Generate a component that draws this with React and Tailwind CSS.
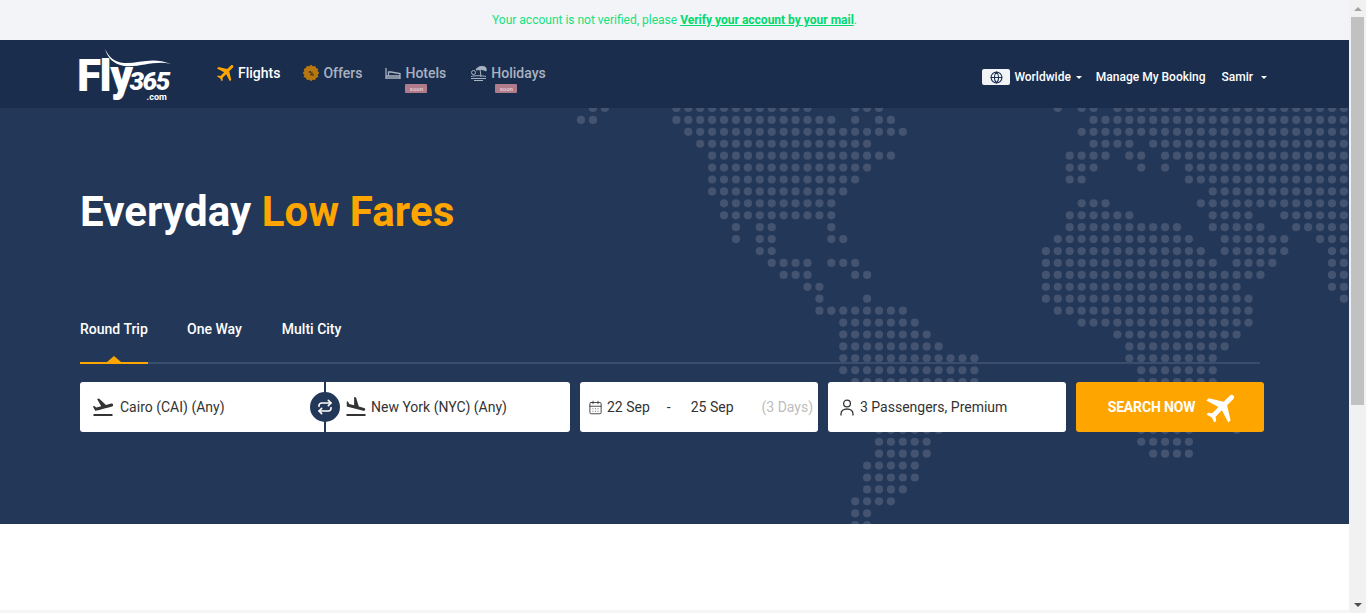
import { Repeat, CalendarDays, Globe } from 'lucide-react';
import { MdFlight, MdFlightTakeoff, MdFlightLand } from 'react-icons/md';

// dot map, one entry per row: [first column, last column] pairs
const MAP_ROWS = [
  [[1, 2], [8, 19], [23, 25], [40, 40], [42, 43], [45, 64]],
  [[0, 1], [8, 21], [23, 23], [25, 26], [43, 64]],
  [[9, 27], [42, 64]],
  [[10, 24], [43, 46], [48, 64]],
  [[11, 26], [41, 44], [46, 47], [49, 64]],
  [[11, 24], [41, 43], [47, 47], [49, 49], [51, 64]],
  [[11, 23], [41, 42], [51, 64]],
  [[11, 22], [53, 64]],
  [[12, 21], [42, 44], [52, 64]],
  [[12, 21], [41, 46], [53, 56], [59, 64]],
  [[13, 13], [15, 16], [21, 21], [41, 50], [53, 57], [60, 64]],
  [[13, 13], [15, 16], [21, 22], [40, 51], [54, 59], [62, 64]],
  [[15, 16], [39, 52], [54, 59], [63, 64]],
  [[16, 19], [21, 23], [39, 53], [55, 58], [63, 64]],
  [[17, 19], [23, 24], [39, 57], [63, 64]],
  [[19, 20], [39, 55], [63, 64]],
  [[20, 20], [24, 24], [39, 56], [64, 64]],
  [[20, 27], [40, 56]],
  [[22, 28], [42, 56]],
  [[22, 29], [45, 55]],
  [[22, 30], [46, 54]],
  [[22, 33], [46, 53]],
  [[22, 33], [47, 53]],
  [[23, 33], [47, 53]],
  [[24, 32], [47, 53]],
  [[24, 32], [47, 53]],
  [[25, 31], [47, 53]],
  [[25, 30], [47, 51], [55, 55]],
  [[25, 29], [47, 51]],
  [[25, 29], [48, 51]],
  [[24, 28]],
  [[24, 28]],
  [[24, 27]],
  [[23, 26]],
  [[23, 24]],
  [[23, 24]],
];

const DotMap = () => (
  <svg className="absolute inset-0 w-full h-full" viewBox="0 0 1349 416" preserveAspectRatio="xMinYMin slice">
    {MAP_ROWS.flatMap((ranges, r) =>
      ranges.flatMap(([from, to]) =>
        Array.from({ length: to - from + 1 }, (_, i) => (
          <circle key={`${r}-${from + i}`} cx={581 + (from + i) * 11.92} cy={r * 11.92} r="4.1" fill="#435370" />
        ))
      )
    )}
  </svg>
);

const Logo = () => (
  <div className="relative flex items-start w-[92px] h-[52px] text-white font-['Roboto',sans-serif]">
    <svg className="absolute left-0 top-0" width="92" height="30" viewBox="0 0 92 30">
      <path d="M25 1 C29 9 34 14 44 15 C58 16 72 8 91 16 C74 12 60 20 44 18 C33 16 28 10 25 1 Z" fill="#fff" />
    </svg>
    <span className="ml-[-3px] mt-[5px] text-[44px] leading-[46px] font-black tracking-[-1.5px]">Fly</span>
    <div className="flex flex-col items-end ml-[-2px] mt-[21px]">
      <span className="text-[26px] leading-[24px] font-black italic tracking-[-1.5px]">365</span>
      <span className="text-[9px] leading-[8px] font-bold mr-[2px]">.com</span>
    </div>
  </div>
);

// scalloped sticker behind the percent sign
const BadgeIcon = () => (
  <svg width="16" height="16" viewBox="0 0 16 16">
    <circle cx="8" cy="8" r="7" fill="#b8780f" />
    {Array.from({ length: 12 }, (_, i) => (
      <circle key={i} cx={8 + 6.6 * Math.cos((i * Math.PI) / 6)} cy={8 + 6.6 * Math.sin((i * Math.PI) / 6)} r="1.4" fill="#b8780f" />
    ))}
    <text x="8" y="10.5" textAnchor="middle" fontSize="7.5" fontWeight="700" fill="#2a2a2a">%</text>
  </svg>
);

const BedIcon = () => (
  <svg width="16" height="12" viewBox="0 0 16 12" fill="none" stroke="#a9b2c0" strokeWidth="1.3">
    <path d="M1 1v11M1 9h14M15 12V6.500L6 5H3.500v4M1 11h14" />
  </svg>
);

const BeachIcon = () => (
  <svg className="ml-px" width="17" height="16" viewBox="0 0 17 16" fill="none" stroke="#a9b2c0" strokeWidth="1">
    <path d="M6 5c1-3 5-4.500 9-3 1 .5 1.500 2 1 4-2-1.500-6-2-10-1z" fill="#a9b2c0" />
    <path d="M10 4l1 8" />
    <circle cx="3.500" cy="7.500" r="2" />
    <path d="M1 11.500c3-1 11-1 15 0M1 13.500h15M4 15.500h9" />
  </svg>
);

const PersonIcon = () => (
  <svg width="14" height="17" viewBox="0 0 14 17" fill="none" stroke="#333" strokeWidth="1.3">
    <circle cx="7" cy="4.500" r="3.400" />
    <path d="M1 16.500v-1.500c0-3 2.500-5 6-5s6 2 6 5v1.500" />
  </svg>
);

const Caret = () => (
  <span className="inline-block w-0 h-0 border-x-[3px] border-x-transparent border-t-[3px] border-t-white" />
);

const NavItem = ({ icon, label, active, soonClass }) => (
  <div className={`relative flex items-center gap-1 text-sm font-medium ${active ? 'text-white' : 'text-[#a9b2c0]'}`}>
    {icon}
    <span>{label}</span>
    {soonClass && (
      <span className={`absolute top-[21px] w-[22px] h-[9px] rounded-[1px] bg-[#b07c8c] text-[6px] leading-[9px] text-center text-[#e6d5da] ${soonClass}`}>soon</span>
    )}
  </div>
);

export default function App() {
  return (
    <div className="flex h-[613px] overflow-hidden bg-white font-['Roboto',sans-serif]">
      <main className="flex-1 flex flex-col min-w-0">
        <div className="h-10 shrink-0 bg-[#f2f4f7] flex items-center justify-center text-xs text-[#12e27f]">
          <span>Your account is not verified, please&nbsp;</span>
          <a className="font-bold underline text-[#00d96f]">Verify your account by your mail</a>
          <span>.</span>
        </div>

        <nav className="h-[68px] shrink-0 bg-[#1a2d4d] flex items-center pl-20 pr-[82px]">
          <Logo />
          <div className="flex items-center h-5 ml-[46px] mt-[-3px] gap-[23px]">
            <NavItem active label="Flights" icon={<MdFlight size={23} className="-ml-[3px] -mr-1 text-[#ffa500] rotate-45" />} />
            <NavItem label="Offers" icon={<BadgeIcon />} />
            <NavItem soonClass="left-[20px]" label="Hotels" icon={<BedIcon />} />
            <NavItem soonClass="left-[26px]" label="Holidays" icon={<BeachIcon />} />
          </div>
          <div className="ml-auto mt-[6px] flex items-center text-xs font-medium text-white">
            <span className="flex items-center justify-center w-7 h-4 rounded-[2px] bg-[#f2f4f7]">
              <Globe size={13} className="text-[#1a2d4d]" strokeWidth={2} />
            </span>
            <span className="ml-1">Worldwide</span>
            <span className="ml-[5px] flex"><Caret /></span>
            <span className="ml-[14px]">Manage My Booking</span>
            <span className="ml-4">Samir</span>
            <span className="ml-2 flex"><Caret /></span>
          </div>
        </nav>

        <section className="relative h-[416px] shrink-0 overflow-hidden bg-[#233858]">
          <DotMap />
          <div className="relative pl-20 pr-[85px]">
            <h1 className="mt-[79px] text-[42px] leading-[50px] font-bold tracking-[0.1px] text-white">
              Everyday <span className="text-[#ffa500]">Low Fares</span>
            </h1>

            <div className="mt-[77px] flex gap-10 w-[1180px] h-[50px] border-b-2 border-[#3a4d6c] text-sm font-medium text-white">
              <div className="relative h-[50px] w-[68px] pt-[5px] border-b-2 border-[#ffa500]">
                Round Trip
                <span className="absolute left-[27px] bottom-0 w-0 h-0 border-x-[7px] border-x-transparent border-b-[6px] border-b-[#ffa500]" />
              </div>
              <div className="pt-[5px] ml-[-1px]">One Way</div>
              <div className="pt-[5px]">Multi City</div>
            </div>

            <div className="mt-[18px] flex h-[50px] text-sm text-[#333]">
              <div className="relative flex w-[490px] bg-white rounded-[3px]">
                <div className="w-[244px] flex items-center pl-[11px] gap-[5px]">
                  <MdFlightTakeoff size={24} className="text-[#333]" />
                  <span>Cairo (CAI) (Any)</span>
                </div>
                <div className="flex-1 flex items-center pl-[18px] gap-[3px] border-l-2 border-[#233858]">
                  <MdFlightLand size={24} className="text-[#333]" />
                  <span>New York (NYC) (Any)</span>
                </div>
                <span className="absolute left-[230px] top-[10px] flex items-center justify-center w-[30px] h-[30px] rounded-full bg-[#233858]">
                  <Repeat size={16} className="text-white" strokeWidth={2.4} />
                </span>
              </div>

              <div className="ml-[10px] w-[238px] flex items-center pl-2 bg-white rounded-[3px]">
                <CalendarDays size={15} strokeWidth={1.4} className="text-[#333]" />
                <span className="ml-1">22 Sep</span>
                <span className="ml-[17px]">-</span>
                <span className="ml-5">25 Sep</span>
                <span className="ml-7 text-[#bdbdbd]">(3 Days)</span>
              </div>

              <div className="ml-[10px] w-[238px] flex items-center pl-3 gap-[6px] bg-white rounded-[3px]">
                <PersonIcon />
                <span>3 Passengers, Premium</span>
              </div>

              <div className="ml-[10px] w-[188px] flex items-center justify-center pl-1 gap-[14px] bg-[#ffa500] rounded-[3px] text-white font-bold tracking-[-0.15px]">
                <span>SEARCH NOW</span>
                <MdFlight size={39} className="-mx-[6px] rotate-45" />
              </div>
            </div>
          </div>
        </section>

        <div className="flex-1 bg-white" />
        <div className="h-[3px] shrink-0 bg-[#f5f5f5]" />
      </main>

      <aside className="w-[17px] shrink-0 flex flex-col items-center bg-[#f1f1f1]">
        <div className="h-[17px] shrink-0 flex items-center justify-center">
          <span className="w-0 h-0 border-x-[4px] border-x-transparent border-b-[4px] border-b-[#a3a3a3]" />
        </div>
        <div className="w-[13px] h-[388px] shrink-0 bg-[#c1c1c1]" />
        <div className="mt-auto h-[17px] shrink-0 flex items-center justify-center">
          <span className="w-0 h-0 border-x-[4px] border-x-transparent border-t-[4px] border-t-[#505050]" />
        </div>
      </aside>
    </div>
  );
}
